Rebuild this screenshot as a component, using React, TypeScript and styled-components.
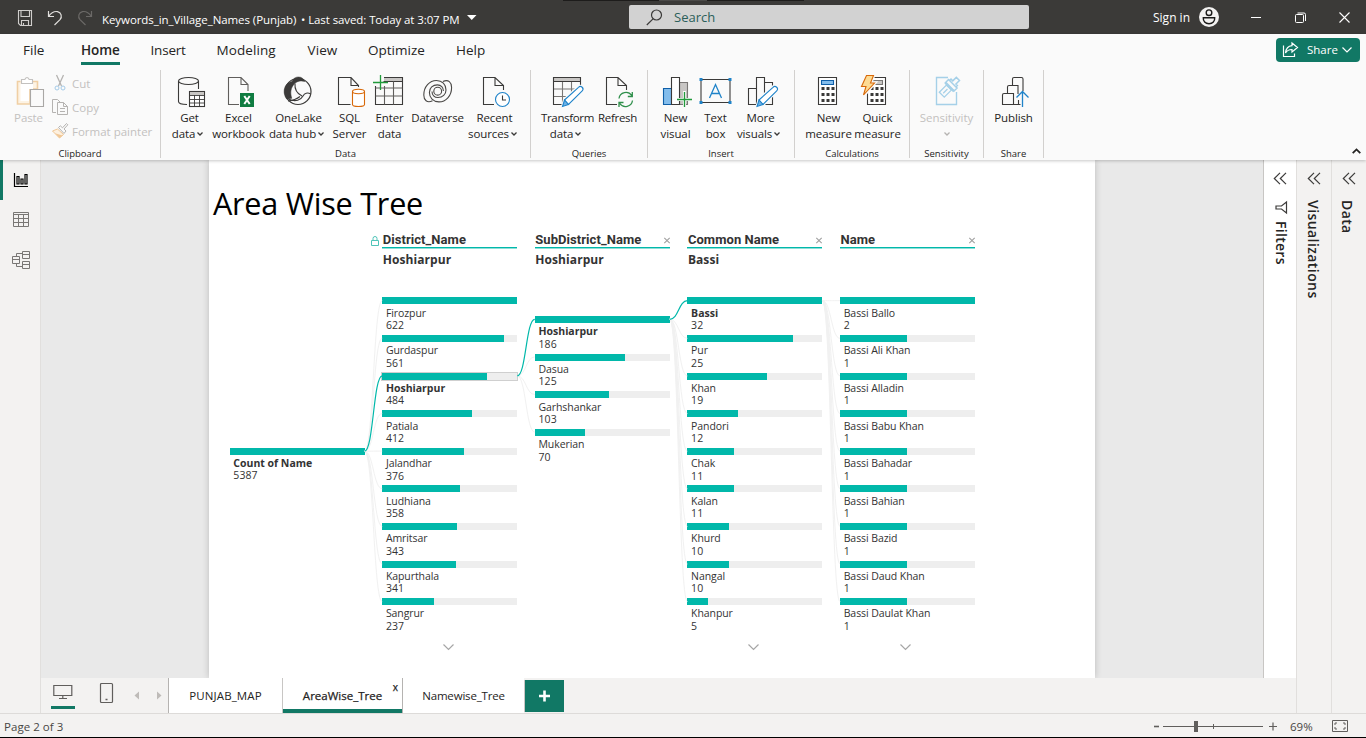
import React from "react";
import styled, { createGlobalStyle } from "styled-components";

const GREEN = "#117865";
const TEAL = "#01b8aa";
const INK = "#252423";

const Global = createGlobalStyle`
  html, body { margin: 0; padding: 0; }
  body { font-family: "Open Sans", "Noto Sans", sans-serif; color: ${INK}; background: #fafafa; overflow: hidden; }
  * { box-sizing: border-box; }
  svg { display: block; overflow: visible; flex: none; }
`;

const Window = styled.div`
  width: 1366px;
  height: 738px;
  display: flex;
  flex-direction: column;
  border-bottom: 1px solid #000;
  overflow: hidden;
`;

/* ---------- title bar ---------- */

const TitleBar = styled.header`
  position: relative;
  height: 34px;
  flex: none;
  display: flex;
  align-items: flex-start;
  background: #3b3a38;
  color: #fff;
`;
const TopNotch = styled.div`
  position: absolute;
  left: 563px;
  top: 0;
  width: 241px;
  height: 1px;
  background: linear-gradient(to right, #1d1c1b 96px, #4b4a48 96px 144px, #1d1c1b 144px);
`;
const QuickAccess = styled.div`
  width: 102px;
  height: 34px;
  padding: 10px 0 0 17px;
  display: flex;
  gap: 14px;
`;
const FileTitle = styled.div`
  width: 527px;
  padding-top: 12px;
  display: flex;
  font-size: 11.5px;
  line-height: 16px;
  white-space: pre;
`;
const FileName = styled.span`
  width: 199px;
  letter-spacing: -0.07px;
`;
const SavedAt = styled.span`
  width: 166px;
  letter-spacing: -0.09px;
`;
const SearchBox = styled.div`
  width: 400px;
  height: 24px;
  margin-top: 5px;
  padding-left: 17px;
  display: flex;
  align-items: center;
  gap: 11px;
  border-radius: 2px;
  background: #d2d2d2;
  color: #2b5f5a;
  font-size: 13px;
  line-height: 24px;
`;
const SignIn = styled.div`
  width: 198px;
  padding: 7px 0 0 124px;
  display: flex;
  gap: 9px;
  font-size: 12px;
  line-height: 21px;
  white-space: nowrap;
`;
const WindowButtons = styled.div`
  padding: 12px 0 0 24px;
  display: flex;
  gap: 33px;
`;

/* ---------- ribbon ---------- */

const Ribbon = styled.section`
  position: relative;
  z-index: 2;
  height: 126px;
  flex: none;
  background: #fafafa;
  box-shadow: 0 1px 3px rgba(0, 0, 0, 0.22);
`;
const TabRow = styled.nav`
  height: 32px;
  padding-left: 23px;
  display: flex;
`;
const Tab = styled.div<{ $w: number }>`
  width: ${(p) => p.$w}px;
  padding-top: 6px;
  font-size: 13.5px;
  line-height: 20px;
`;
const TabText = styled.span<{ $on?: boolean; $ls?: number }>`
  display: inline-block;
  height: 25px;
  letter-spacing: ${(p) => p.$ls ?? 0}px;
  font-weight: ${(p) => (p.$on ? 600 : 400)};
  border-bottom: ${(p) => (p.$on ? `3px solid ${GREEN}` : "0")};
`;
const ShareButton = styled.button`
  width: 84px;
  height: 24px;
  margin: 4px 6px 0 auto;
  padding: 0 0 0 6px;
  display: flex;
  align-items: center;
  gap: 8px;
  border: 0;
  border-radius: 4px;
  background: ${GREEN};
  color: #fff;
  font: 11.5px/24px "Open Sans", sans-serif;
`;
const ShareText = styled.span`
  width: 27px;
`;
const Groups = styled.div`
  height: 94px;
  padding-top: 4px;
  display: flex;
`;
const Group = styled.div<{ $w: number; $pad: number }>`
  width: ${(p) => p.$w}px;
  height: 88px;
  display: flex;
  flex-direction: column;
  justify-content: space-between;
  border-right: 1px solid #d2d0ce;
  > div:first-child { padding-left: ${(p) => p.$pad}px; }
`;
const GroupBody = styled.div`
  display: flex;
  padding-top: 5px;
`;
const GroupName = styled.div`
  font-size: 9.5px;
  line-height: 12px;
  margin-bottom: -2px;
  text-align: center;
`;
const Cmd = styled.div<{ $w: number; $off?: boolean }>`
  width: ${(p) => p.$w}px;
  display: flex;
  flex-direction: column;
  align-items: center;
  font-size: 11.5px;
  line-height: 16px;
  white-space: nowrap;
  color: ${(p) => (p.$off ? "#c3c1bf" : INK)};
  svg.big { margin-bottom: 3px; }
`;
const CmdLine = styled.span<{ $ls?: number; $drop?: boolean }>`
  height: 16px;
  display: flex;
  align-items: center;
  gap: 2px;
  padding-left: 1px;
  padding-right: ${(p) => (p.$drop ? 4 : 0)}px;
  letter-spacing: ${(p) => p.$ls ?? -0.1}px;
`;
const ClipList = styled.div`
  margin-top: -4px;
  padding-left: 3px;
  display: flex;
  flex-direction: column;
`;
const ClipItem = styled.div`
  height: 24px;
  display: flex;
  align-items: center;
  gap: 4px;
  font-size: 11.5px;
  line-height: 15px;
  color: #c3c1bf;
  white-space: nowrap;
`;
const Collapse = styled.div`
  margin: 78px 5px 0 auto;
`;

/* ---------- body ---------- */

const Body = styled.main`
  height: 553px;
  flex: none;
  display: flex;
`;
const Rail = styled.aside`
  width: 41px;
  border-right: 1px solid #e1dfdd;
  background: #f3f2f1;
`;
const RailItem = styled.div<{ $on?: boolean }>`
  height: 40px;
  display: flex;
  align-items: center;
  padding-left: ${(p) => (p.$on ? 8 : 11)}px;
  border-left: ${(p) => (p.$on ? `3px solid ${GREEN}` : "0")};
`;
const Center = styled.div`
  width: 1255px;
  display: flex;
  flex-direction: column;
`;
const Stage = styled.div`
  height: 518px;
  display: flex;
`;
const Canvas = styled.div`
  width: 1222px;
  display: flex;
  justify-content: flex-start;
  padding-left: 168px;
  background: #e9e9e9;
  overflow: hidden;
`;
const Page = styled.div`
  position: relative;
  width: 886px;
  height: 518px;
  background: #fff;
  box-shadow: 0 0 7px rgba(0, 0, 0, 0.2);
`;
const PageTitle = styled.h1`
  margin: 0;
  padding: 21px 0 0 4px;
  height: 72px;
  font-size: 30.6px;
  font-weight: 400;
  line-height: 44px;
  letter-spacing: -0.24px;
  color: #000;
  white-space: nowrap;
`;
const Pane = styled.aside<{ $w: number; $white?: boolean }>`
  width: ${(p) => p.$w}px;
  flex: none;
  padding-top: 12px;
  display: flex;
  flex-direction: column;
  align-items: center;
  border-left: 1px solid ${(p) => (p.$white ? "#c8c6c4" : "#e1dfdd")};
  background: ${(p) => (p.$white ? "#fff" : "#f3f2f1")};
`;
const PaneTitle = styled.div<{ $ls: number; $top: number; $right?: number }>`
  margin-top: ${(p) => p.$top}px;
  margin-right: ${(p) => p.$right ?? 0}px;
  writing-mode: vertical-rl;
  font-size: 14px;
  font-weight: 600;
  line-height: 18px;
  letter-spacing: ${(p) => p.$ls}px;
`;

/* ---------- decomposition tree ---------- */

const Tree = styled.div`
  display: flex;
  gap: 17.6px;
  padding-left: 20.5px;
`;
const Level = styled.div`
  width: 135px;
`;
const LevelHead = styled.div`
  position: relative;
  height: 16px;
  display: flex;
  justify-content: space-between;
  align-items: center;
  border-bottom: 1px solid ${TEAL};
  box-shadow: 0 1px 0 rgba(1, 184, 170, 0.45);
  font: 700 13px/15px Roboto, sans-serif;
  color: #333;
`;
const LevelName = styled.span`
  padding-left: 0.6px;
  letter-spacing: 0.06px;
`;
const LockSlot = styled.span`
  position: absolute;
  left: -11px;
  top: 4px;
`;
const Picked = styled.div`
  height: 18px;
  margin-top: 3px;
  padding-left: 0.6px;
  font-size: 12px;
  font-weight: 700;
  line-height: 18px;
  letter-spacing: 0.08px;
  color: #333;
`;
const Rows = styled.div<{ $top: number }>`
  padding-top: ${(p) => p.$top}px;
`;
const Row = styled.div`
  height: 37.6px;
  font-size: 10.5px;
  line-height: 12.4px;
  letter-spacing: -0.08px;
  color: #333;
  white-space: nowrap;
`;
const Track = styled.div<{ $sel?: boolean }>`
  height: 7px;
  background: #eee;
  box-shadow: ${(p) => (p.$sel ? "0 0 0 1px #cfcfcf" : "none")};
`;
const Bar = styled.div`
  height: 7px;
  background: ${TEAL};
`;
const RowName = styled.div<{ $bold?: boolean }>`
  padding: 2.3px 0 0 3.8px;
  font-weight: ${(p) => (p.$bold ? 700 : 400)};
  letter-spacing: ${(p) => (p.$bold ? 0 : -0.08)}px;
`;
const RowValue = styled.div`
  padding-left: 3.8px;
  letter-spacing: 0.1px;
`;
const MoreSlot = styled.div`
  display: flex;
  justify-content: center;
  margin: 8px 3px 0 0;
`;
const Links = styled.svg`
  position: absolute;
  left: 0;
  top: 0;
  pointer-events: none;
`;

/* ---------- page tabs + status bar ---------- */

const PageBar = styled.div`
  height: 35px;
  display: flex;
  background: #f3f2f1;
`;
const ViewSwitch = styled.div`
  width: 127px;
  display: flex;
  padding-left: 10px;
  align-items: flex-start;
`;
const ViewIcon = styled.div<{ $w: number; $on?: boolean }>`
  width: ${(p) => p.$w}px;
  height: 31px;
  display: flex;
  justify-content: center;
  padding-top: 4px;
  border-bottom: ${(p) => (p.$on ? `3px solid ${GREEN}` : "0")};
`;
const PageTab = styled.div<{ $w: number; $on?: boolean; $ls?: number }>`
  position: relative;
  width: ${(p) => p.$w}px;
  height: 35px;
  text-align: center;
  font-size: 11.5px;
  line-height: 35px;
  letter-spacing: ${(p) => p.$ls ?? 0}px;
  border-left: 1px solid ${(p) => (p.$on ? "#c8c6c4" : "#b5b3b1")};
  box-shadow: ${(p) => (p.$on ? `inset 0 -4px 0 ${GREEN}` : "none")};
  -webkit-text-stroke: ${(p) => (p.$on ? "0.25px #252423" : "0")};
  background: #fff;
`;
const CloseMark = styled.span`
  position: absolute;
  right: 4px;
  top: 3px;
  font-size: 10px;
  line-height: 12px;
`;
const AddTab = styled.div`
  width: 40px;
  height: 32px;
  margin-top: 2px;
  display: flex;
  align-items: center;
  justify-content: center;
  border-left: 1px solid #c8c6c4;
  background: ${GREEN};
`;
const StatusBar = styled.footer`
  height: 24px;
  flex: none;
  display: flex;
  align-items: center;
  justify-content: space-between;
  padding: 1px 18px 0 4px;
  border-top: 1px solid #dddbd9;
  background: #f3f2f1;
  font-size: 11.5px;
  color: #484644;
`;
const PageCount = styled.span`
  letter-spacing: 0.04px;
`;
const Zoom = styled.div`
  display: flex;
  align-items: center;
`;
const ZoomValue = styled.span`
  width: 24px;
  margin: 0 18px 0 13px;
`;

/* ---------- icons ---------- */

const D = "#3b3a39";
const BLUE = "#1f83c9";

const Big = ({ children }: { children: React.ReactNode }) => (
  <svg className="big" width="32" height="32" viewBox="0 0 32 32" fill="none" stroke={D} strokeWidth="1.1">
    {children}
  </svg>
);

const Pencil = ({ x = 0 }: { x?: number }) => (
  <g transform={`translate(${x} 0)`}>
    <path d="M11.5 31.5l2-7L27.3 12a2.7 2.7 0 0 1 4 3.8L18 29.5z" fill="#fafafa" stroke="#fafafa" strokeWidth="3" />
    <path d="M13.5 25L27.5 12.3a2.5 2.5 0 0 1 3.7 3.6L17.5 29.500z" fill="#fff" stroke={BLUE} />
    <path d="M13.5 25l4 4.5-6 2z" fill="#6cb1e6" stroke={BLUE} />
  </g>
);

const Chevron = ({ w = 6, c = D, s = 1.3 }: { w?: number; c?: string; s?: number }) => (
  <svg width={w} height={w / 2 + 1} viewBox={`0 0 ${w} ${w / 2 + 1}`} fill="none" stroke={c} strokeWidth={s}>
    <path d={`M.5 .5L${w / 2} ${w / 2}L${w - 0.5} .5`} />
  </svg>
);

const GetDataIcon = () => (
  <Big>
    <ellipse cx="15.5" cy="6" rx="10" ry="3.5" />
    <path d="M5.5 6v20.5c0 1.800 4 3 8.500 3M25.5 6v8" />
    <rect x="16.5" y="16.5" width="15" height="15" fill="#fff" />
    <path d="M17 17h14v3H17z" fill="#c8c6c4" stroke="none" />
    <path d="M16.5 20.5h15M16.5 24.5h15M16.5 28h15M21.5 20v11.500M26.5 20v11.500" strokeWidth=".9" />
  </Big>
);
const ExcelIcon = () => (
  <Big>
    <g stroke="#605e5c"><path d="M17 29.5H6.5V2.500H19l7 7V16M19 2.500v7h7" /></g>
    <rect x="18" y="18" width="14" height="14" fill="#107c41" stroke="none" />
    <path d="M22.3 21l5.400 8M27.7 21l-5.400 8" stroke="#fff" strokeWidth="2" />
  </Big>
);
const OneLakeIcon = () => (
  <Big>
    <circle cx="16" cy="16.500" r="13" strokeWidth="1.200" />
    <path d="M10 6.500C11.500 3 14 2 16.500 2c3 0 5.200 1.600 6.300 4.600-3.800-1.400-7.300-.8-10.300 2.200-3.500 3.500-4.700 8.500-2.700 14.500-2 .8-3.800 1-5.300.5C1.800 20 1.600 15.500 3 12c1.300-3 3.700-5 7-5.500z" fill={D} strokeWidth=".5" />
    <path d="M13 8.500c-.5 5.500 2 10 7 12.500M7 24.300c6.500 3 12 .6 14-3.300 1.600-3 4.500-3.800 7.700-2M6 26c4.500-.5 8.500-1.700 12-4.500" />
  </Big>
);
const SqlIcon = () => (
  <Big>
    <path d="M17.5 29.500H5.500V2.500H18l7.500 8V12M18 2.500v8h7.500" />
    <g stroke="#d8690a" fill="#fff">
      <path d="M19.5 16.500v13c0 1.200 2.800 2 6 2s6-.8 6-2v-13" />
      <ellipse cx="25.500" cy="16.500" rx="6" ry="2.200" />
    </g>
  </Big>
);
const EnterIcon = () => (
  <Big>
    <path d="M11 3h19v3H11z" fill="#c8c6c4" stroke="none" />
    <path d="M11 2.500h18.500v27h-27V11M10.500 6.500h19" />
    <path d="M2.500 13h27M2.500 21h27M11.500 11v18.500M20.500 6.500v23" stroke="#605e5c" />
    <path d="M7.500 0v15M0 7.500h15" stroke="#219a3b" strokeWidth="1.300" />
  </Big>
);
const swirl = "M11.500 25.800C6 28.500 2.800 25 2.800 20 2.800 11.500 8.500 5.500 15.500 5.500c5.700 0 9.500 4 9.500 9.500 0 4.500-3.500 7.500-8 7.500-3.700 0-6-2.600-6-6";
const DataverseIcon = () => (
  <Big>
    <g strokeWidth="1.100" stroke="#4a4846">
      <path d={swirl} />
      <path d={swirl} transform="rotate(180 16.700 16.200)" />
      <circle cx="16.700" cy="16.200" r="3.900" />
    </g>
  </Big>
);
const RecentIcon = () => (
  <Big>
    <path d="M16 29.500H5.500V2.500H17l8.500 8V15M17 2.500v8h8.500" />
    <circle cx="24.500" cy="24.500" r="7" stroke={BLUE} fill="#fff" />
    <path d="M24.500 20.500v4.500h3.500" />
  </Big>
);
const TransformIcon = () => (
  <Big>
    <path d="M3 3h26v3H3z" fill="#c8c6c4" stroke="none" />
    <path d="M3 14h26M3 21.500h20M11.500 6.500v23M20.500 6.500v15" stroke="#797775" />
    <path d="M13 29.500H2.500v-27h27V12M2.500 6.500h27" />
    <Pencil />
  </Big>
);
const RefreshIcon = () => (
  <Big>
    <path d="M16 29.500H5.500V2.500H17l8.500 8V15M17 2.500v8h8.500" />
    <g stroke="#2f8f4b" strokeWidth="1.300">
      <path d="M18 23.500a7 7 0 0 1 12.700-3M31.300 17v4.500h-4.500M31.500 25.500a7 7 0 0 1-12.700 3M18 32v-4.500h4.500" />
    </g>
  </Big>
);
const NewVisualIcon = () => (
  <Big>
    <path d="M20.500 7.500h8v22h-8z" fill="#c8c6c4" stroke="#797775" />
    <path d="M4.500 13.500h8v16h-8z" fill="#83bdec" stroke="#0f5fa8" />
    <path d="M12.500 2.500h8v27h-8z" fill="#fff" />
    <path d="M25.500 16v17M18 24.500h16" stroke="#fafafa" strokeWidth="3" />
    <path d="M25.500 17v15M18 24.500h15" stroke="#219a3b" strokeWidth="1.300" />
  </Big>
);
const TextBoxIcon = () => (
  <Big>
    <path d="M2 4.500h29v23H2z" />
    <path d="M10.500 23L16.500 9.500 22.500 23M12.500 18.500h8" stroke={BLUE} strokeWidth="1.300" />
    <path d="M.5 3h3v3h-3zM29.500 3h3v3h-3zM.5 26h3v3h-3zM29.500 26h3v3h-3z" fill={BLUE} stroke="none" />
  </Big>
);
const MoreVisualsIcon = () => (
  <Big>
    <path d="M4.500 13.500h8v16h-8zM12.500 2.500h8v27h-8zM20.500 7.500h8v22h-8" />
    <Pencil x={1.5} />
  </Big>
);
const keys = [0, 1, 2].flatMap((r) => [0, 1, 2].map((c) => `M${9 + c * 5} ${12 + r * 6}h3v3h-3z`)).join("");
const MeasureIcon = () => (
  <Big>
    <path d="M6.500 2.500h18v27h-18z" fill="#fff" />
    <path d="M9.500 5.500h12v4h-12z" fill="#83bdec" stroke="#0f5fa8" />
    <path d={keys} transform="translate(.5 0)" fill={D} stroke="none" />
  </Big>
);
const QuickIcon = () => (
  <Big>
    <path d="M6.500 2.500h18v27h-18z" fill="#fff" />
    <path d="M12 5.500h9.500v4H12z" fill="#c8c6c4" stroke="#797775" />
    <path d={keys} transform="translate(.5 0)" fill={D} stroke="none" />
    <g transform="translate(-1 0)">
      <path d="M6.500.5h7L10.500 8h4L3.500 20.500l2.500-9H1z" fill="#fafafa" stroke="#fafafa" strokeWidth="3.500" />
      <path d="M6.500.5h7L10.500 8h4L3.500 20l2.500-8.500H1.500z" fill="#fddb94" stroke="#d8690a" />
    </g>
  </Big>
);
const SensitivityIcon = () => (
  <Big>
    <g stroke="#a5d0e8">
      <path d="M18 2.500H6.500v27h20V17" strokeWidth="1.400" />
      <g transform="translate(21 10.500) rotate(-45)">
        <path d="M-13-3.500h10v7h-10zM-11 0h6" fill="#fafafa" strokeWidth="1.300" />
        <path d="M-2-6h4.500V6H-2zM2.500-4.500h2v2.500h5v4.500h-5V4.500h-2z" fill="#fafafa" strokeWidth="1.500" />
        <path d="M-2-6V6" strokeWidth="2.500" />
      </g>
    </g>
  </Big>
);
const PublishIcon = () => (
  <Big>
    <path d="M11 29.500H5.500V20q0-1.500 1.500-1.500h9.500v11H11M10.500 18.500V12q0-1.500 1.500-1.500h9V19M15.500 10.500V4q0-1.500 1.500-1.500h7.500q1.500 0 1.500 1.500v12M16.500 29.500h7M21.500 25v4.500" />
    <path d="M25.500 32V17M19.500 22.500l6-6 6 6" stroke={BLUE} strokeWidth="1.300" />
  </Big>
);
const PasteIcon = () => (
  <Big>
    <path d="M8.500 6.500h-3v22.500H18V14h7.500V6.500H21" stroke="#f0cfa4" fill="#fdf3e4" strokeWidth="1.600" />
    <path d="M8.500 14v12H17V14h4V9H8.500z" fill="#fff" stroke="none" />
    <path d="M9.500 8.500v-4h3.300q2.200-4 4.400 0h3.300v4z" fill="#fff" stroke="#c3c1bf" />
    <path d="M18.500 14.500h13v17h-13z" fill="#fafafa" stroke="#a9a7a5" />
  </Big>
);

const Chevrons = () => (
  <svg width="14" height="14" viewBox="0 0 14 14" fill="none" stroke={D} strokeWidth="1.200">
    <path d="M7 .8L1.300 6.500 7 12.200M13 .8L7.300 6.500l5.700 5.700" />
  </svg>
);
const SmallX = () => (
  <svg width="6" height="6" viewBox="0 0 6 6" stroke="#a0a0a0" strokeWidth="1.100">
    <path d="M.3.8l5.400 5.400M5.700.8L.3 6.200" />
  </svg>
);
const Lock = () => (
  <svg width="8" height="10" viewBox="0 0 8 10" fill="none" stroke="#4fc4b8">
    <path d="M.5 4.500h7v5h-7zM2 4.500V2.500a2 2 0 0 1 4 0v2" />
  </svg>
);

/* ---------- data ---------- */

type Item = [string, number];
interface LevelData {
  name: string;
  picked: string;
  offset: number;
  selected: number;
  more: boolean;
  lock?: boolean;
  items: Item[];
}
const levels: LevelData[] = [
  {
    name: "District_Name", picked: "Hoshiarpur", offset: 0, selected: 2, more: true, lock: true,
    items: [["Firozpur", 622], ["Gurdaspur", 561], ["Hoshiarpur", 484], ["Patiala", 412], ["Jalandhar", 376], ["Ludhiana", 358], ["Amritsar", 343], ["Kapurthala", 341], ["Sangrur", 237]],
  },
  {
    name: "SubDistrict_Name", picked: "Hoshiarpur", offset: 18.6, selected: 0, more: false,
    items: [["Hoshiarpur", 186], ["Dasua", 125], ["Garhshankar", 103], ["Mukerian", 70]],
  },
  {
    name: "Common Name", picked: "Bassi", offset: 0, selected: 0, more: true,
    items: [["Bassi", 32], ["Pur", 25], ["Khan", 19], ["Pandori", 12], ["Chak", 11], ["Kalan", 11], ["Khurd", 10], ["Nangal", 10], ["Khanpur", 5]],
  },
  {
    name: "Name", picked: "", offset: 0, selected: -1, more: true,
    items: [["Bassi Ballo", 2], ["Bassi Ali Khan", 1], ["Bassi Alladin", 1], ["Bassi Babu Khan", 1], ["Bassi Bahadar", 1], ["Bassi Bahian", 1], ["Bassi Bazid", 1], ["Bassi Daud Khan", 1], ["Bassi Daulat Khan", 1]],
  },
];

const PITCH = 152.6;
const rowY = (level: number, i: number) => 140.7 + levels[level].offset + i * 37.6;

const TreeLinks = () => {
  const light: string[] = [];
  const strong: string[] = [];
  levels.forEach((lv, l) => {
    const x0 = 155.6 + l * PITCH;
    const x1 = x0 + 17.6;
    const y0 = l === 0 ? 291.2 : rowY(l - 1, levels[l - 1].selected);
    const mid = (x0 + x1) / 2;
    lv.items.forEach((_, i) => {
      const y1 = rowY(l, i);
      const d = `M${x0} ${y0}C${mid} ${y0} ${mid} ${y1} ${x1} ${y1}`;
      (i === lv.selected ? strong : light).push(d);
    });
  });
  return (
    <Links width="886" height="518" fill="none">
      <path d={light.join("")} stroke="#f1f1f1" />
      <path d={strong.join("")} stroke={TEAL} strokeWidth="1.200" />
    </Links>
  );
};

const TreeRow = ({ item, max, bold, outlined }: { item: Item; max: number; bold?: boolean; outlined?: boolean }) => (
  <Row>
    <Track $sel={outlined}>
      <Bar style={{ width: `${(item[1] / max) * 100}%` }} />
    </Track>
    <RowName $bold={bold}>{item[0]}</RowName>
    <RowValue>{item[1]}</RowValue>
  </Row>
);

const Command = ({ w, icon, a, b, ls, drop, off }: { w: number; icon: React.ReactNode; a: string; b?: string; ls?: number; drop?: boolean; off?: boolean }) => (
  <Cmd $w={w} $off={off}>
    {icon}
    <CmdLine $ls={ls}>{a}</CmdLine>
    <CmdLine $drop={drop && !!b}>
      {b}
      {drop && <Chevron c={off ? "#b5b3b1" : D} />}
    </CmdLine>
  </Cmd>
);

export default function App() {
  return (
    <Window>
      <Global />
      <TitleBar>
        <TopNotch />
        <QuickAccess>
          <svg width="16" height="16" viewBox="0 0 16 16" fill="none" stroke="#d0cecc" strokeWidth="1.100">
            <path d="M1.500.5h13v15h-11l-2-2zM4 .5v6h8.500v-6M4.500 15.500v-5h7v5M6.500 15.500v-2.500" />
          </svg>
          <svg width="16" height="16" viewBox="0 0 16 16" fill="none" stroke="#e1dfdd" strokeWidth="1.200">
            <path d="M1.500 1v5.500H7M1.700 6.300C4 3 7 1 10.500 1.600c3.800.9 5 5 2.500 8L7.500 15" />
          </svg>
          <svg width="16" height="16" viewBox="0 0 16 16" fill="none" stroke="#6b6967" strokeWidth="1.200">
            <path d="M14.500 1v5.500H9M14.300 6.300C12 3 9 1 5.500 1.600 1.700 2.500.5 6.600 3 9.600L8.500 15" />
          </svg>
        </QuickAccess>
        <FileTitle>
          <FileName>Keywords_in_Village_Names (Punjab)</FileName>
          <SavedAt>• Last saved: Today at 3:07 PM</SavedAt>
          <svg width="10" height="10" viewBox="0 0 10 10">
            <path d="M0 3h9.500L4.750 8z" fill="#fff" />
          </svg>
        </FileTitle>
        <SearchBox>
          <svg width="17" height="17" viewBox="0 0 17 17" fill="none" stroke="#3b3a39" strokeWidth="1.200">
            <circle cx="10.500" cy="6" r="5" />
            <path d="M7 9.800L.8 16" />
          </svg>
          <span>Search</span>
        </SearchBox>
        <SignIn>
          <span>Sign in</span>
          <svg width="20" height="20" viewBox="0 0 20 20">
            <circle cx="10" cy="10" r="10" fill="#f3f2f1" />
            <circle cx="10" cy="5.700" r="2.800" fill="none" stroke="#1b1a19" strokeWidth="1.400" />
            <path d="M4.300 10.700h11.400c.3 3.500-2 6-5.700 6s-6-2.500-5.700-6z" fill="none" stroke="#1b1a19" strokeWidth="1.400" />
          </svg>
        </SignIn>
        <WindowButtons>
          <svg width="11" height="11" viewBox="0 0 11 11" stroke="#fff"><path d="M0 5.500h10" /></svg>
          <svg width="11" height="11" viewBox="0 0 11 11" fill="none" stroke="#fff">
            <rect x=".5" y="2.500" width="8" height="8" rx="1" />
            <path d="M2.500 1h6.500q1.500 0 1.500 1.500v6.500" />
          </svg>
          <svg width="11" height="11" viewBox="0 0 11 11" stroke="#fff" strokeWidth="1.100"><path d="M.5.5l10 10M10.500.5l-10 10" /></svg>
        </WindowButtons>
      </TitleBar>

      <Ribbon>
        <TabRow>
          <Tab $w={58}><TabText>File</TabText></Tab>
          <Tab $w={69.5}><TabText $on $ls={-0.1}>Home</TabText></Tab>
          <Tab $w={66}><TabText $ls={-0.2}>Insert</TabText></Tab>
          <Tab $w={91}><TabText $ls={0.08}>Modeling</TabText></Tab>
          <Tab $w={60.5}><TabText $ls={0.1}>View</TabText></Tab>
          <Tab $w={88}><TabText>Optimize</TabText></Tab>
          <Tab $w={60}><TabText>Help</TabText></Tab>
          <ShareButton>
            <svg width="17" height="16" viewBox="0 0 17 16" fill="none" stroke="#fff" strokeWidth="1.200">
              <path d="M1.500 3.500v11h11v-3M10 1l5.500 4.500L10 10V7.500C7 7.500 5 8.500 3.500 11 4 6.500 6.500 4 10 3.700z" />
            </svg>
            <ShareText>Share</ShareText>
            <Chevron w={10} c="#fff" s={1.2} />
          </ShareButton>
        </TabRow>
        <Groups>
          <Group $w={161} $pad={7}>
            <GroupBody>
              <Command w={42} icon={<PasteIcon />} a="Paste" off />
              <ClipList>
                <ClipItem>
                  <svg width="16" height="16" viewBox="0 0 16 16" fill="none" stroke="#b5b3b1">
                    <path d="M4.500 0l5 11M11.500 0l-5 11" strokeWidth="1.300" />
                    <circle cx="5" cy="13" r="2" stroke="#a5cbe8" />
                    <circle cx="11" cy="13" r="2" stroke="#a5cbe8" />
                  </svg>
                  Cut
                </ClipItem>
                <ClipItem>
                  <svg width="16" height="16" viewBox="0 0 16 16" fill="none" stroke="#b5b3b1">
                    <path d="M4 13.500H.5V.5h5l2.500 2.500M5.500 3.500h6l4 4v8h-10zM11.500 3.500v4h4M8 9.500h5M8 12.500h5" />
                  </svg>
                  Copy
                </ClipItem>
                <ClipItem>
                  <svg width="16" height="16" viewBox="0 0 16 16" fill="none" stroke="#b5b3b1">
                    <path d="M.5 8L5.500 6l6 5.500-4 3.500z" fill="#fdf0df" stroke="#f0c796" />
                    <path d="M3 10.200l7.500 2.300-3 2.500z" fill="#f0c796" stroke="none" />
                    <path d="M6.500 4.500L8.300 2.800l2.200 2 4-4.300 1.300 1.300-3.800 4.200 2 2-2 2.500z" fill="#fafafa" />
                  </svg>
                  Format painter
                </ClipItem>
              </ClipList>
            </GroupBody>
            <GroupName>Clipboard</GroupName>
          </Group>
          <Group $w={370} $pad={7}>
            <GroupBody>
              <Command w={42} icon={<GetDataIcon />} a="Get" b="data" drop />
              <Command w={56} icon={<ExcelIcon />} a="Excel" b="workbook" />
              <Command w={64} icon={<OneLakeIcon />} a="OneLake" b="data hub" drop />
              <Command w={38} icon={<SqlIcon />} a="SQL" b="Server" />
              <Command w={42} icon={<EnterIcon />} a="Enter" b="data" />
              <Command w={54} icon={<DataverseIcon />} a="Dataverse" ls={-0.17} />
              <Command w={60} icon={<RecentIcon />} a="Recent" b="sources" drop />
            </GroupBody>
            <GroupName>Data</GroupName>
          </Group>
          <Group $w={117} $pad={9}>
            <GroupBody>
              <Command w={54} icon={<TransformIcon />} a="Transform" ls={-0.34} b="data" drop />
              <Command w={46} icon={<RefreshIcon />} a="Refresh" ls={-0.3} />
            </GroupBody>
            <GroupName>Queries</GroupName>
          </Group>
          <Group $w={147} $pad={8}>
            <GroupBody>
              <Command w={38} icon={<NewVisualIcon />} a="New" b="visual" />
              <Command w={42} icon={<TextBoxIcon />} a="Text" b="box" />
              <Command w={48} icon={<MoreVisualsIcon />} a="More" b="visuals" drop />
            </GroupBody>
            <GroupName>Insert</GroupName>
          </Group>
          <Group $w={115} $pad={8}>
            <GroupBody>
              <Command w={50} icon={<MeasureIcon />} a="New" b="measure" />
              <Command w={48} icon={<QuickIcon />} a="Quick" b="measure" />
            </GroupBody>
            <GroupName>Calculations</GroupName>
          </Group>
          <Group $w={74} $pad={6}>
            <GroupBody>
              <Command w={60} icon={<SensitivityIcon />} a="Sensitivity" ls={0} drop off />
            </GroupBody>
            <GroupName>Sensitivity</GroupName>
          </Group>
          <Group $w={60} $pad={6}>
            <GroupBody>
              <Command w={46} icon={<PublishIcon />} a="Publish" />
            </GroupBody>
            <GroupName>Share</GroupName>
          </Group>
          <Collapse>
            <svg width="9" height="6" viewBox="0 0 9 6" fill="none" stroke="#252423" strokeWidth="1.800">
              <path d="M.7 5.200l3.800-3.800 3.800 3.800" />
            </svg>
          </Collapse>
        </Groups>
      </Ribbon>

      <Body>
        <Rail>
          <RailItem $on>
            <svg width="20" height="20" viewBox="0 0 20 20" fill="none" stroke="#000" strokeWidth="1.200">
              <path d="M3.500 3v13.500H17M6 6.500h2v7.500H6zM10 9h2v5h-2zM14 4.500h2v9.500h-2z" />
            </svg>
          </RailItem>
          <RailItem>
            <svg width="20" height="20" viewBox="0 0 20 20" fill="none" stroke="#797775">
              <path d="M2.500 2.500h15v14h-15zM2.500 4.500h15M2.500 8.500h15M2.500 12.500h15M7.500 4.500v12M12.500 4.500v12" />
            </svg>
          </RailItem>
          <RailItem>
            <svg width="20" height="20" viewBox="0 0 20 20" fill="none" stroke="#797775">
              <path d="M1.500 6.500h7v7h-7zM1.500 9.500h7M11.500 1.500h7v7h-7zM11.500 4.500h7M11.500 11.500h7v7h-7zM11.500 14.500h7M5.500 6.500v-3h6M5.500 13.500v3h6" />
            </svg>
          </RailItem>
        </Rail>

        <Center>
          <Stage>
            <Canvas>
              <Page>
                <TreeLinks />
                <PageTitle>Area Wise Tree</PageTitle>
                <Tree>
                  <Level>
                    <Rows $top={215.7}>
                      <TreeRow item={["Count of Name", 5387]} max={5387} bold />
                    </Rows>
                  </Level>
                  {levels.map((lv) => (
                    <Level key={lv.name}>
                      <LevelHead>
                        {lv.lock && <LockSlot><Lock /></LockSlot>}
                        <LevelName>{lv.name}</LevelName>
                        {!lv.lock && <SmallX />}
                      </LevelHead>
                      <Picked>{lv.picked}</Picked>
                      <Rows $top={28.45 + lv.offset}>
                        {lv.items.map((it, i) => (
                          <TreeRow key={it[0]} item={it} max={lv.items[0][1]} bold={i === lv.selected} outlined={i === lv.selected && !!lv.lock} />
                        ))}
                      </Rows>
                      {lv.more && <MoreSlot><Chevron w={11} c="#a6a6a6" s={1.2} /></MoreSlot>}
                    </Level>
                  ))}
                </Tree>
              </Page>
            </Canvas>
            <Pane $w={33} $white>
              <Chevrons />
              <PaneTitle $top={15} $ls={0} $right={-2}>
                <svg width="14" height="13" viewBox="0 0 14 13" fill="none" stroke={D} strokeWidth="1.200">
                  <path d="M12.500 1v11L7.500 8H2V5h5.500z" />
                </svg>
              </PaneTitle>
              <PaneTitle $top={7} $ls={0.3} $right={-2}>Filters</PaneTitle>
            </Pane>
          </Stage>
          <PageBar>
            <ViewSwitch>
              <ViewIcon $w={24} $on>
                <svg width="20" height="17" viewBox="0 0 20 17" fill="none" stroke="#605e5c" strokeWidth="1.200">
                  <path d="M.8 3.500h18v10H.8zM9.800 13.500v3M6 16.500h8" />
                </svg>
              </ViewIcon>
              <ViewIcon $w={64}>
                <svg width="14" height="22" viewBox="0 0 14 22" fill="none" stroke="#605e5c" strokeWidth="1.200">
                  <rect x=".5" y="1.500" width="12" height="19" rx="1" />
                  <path d="M5.500 17.500h2" strokeWidth="1.500" />
                </svg>
              </ViewIcon>
              <svg width="24" height="22" viewBox="0 0 24 22" fill="#bebbb8">
                <path d="M-4.500 17.500l4.500-4v8zM22.500 17.500l-4.500-4v8z" />
              </svg>
            </ViewSwitch>
            <PageTab $w={114} $ls={0.1}>PUNJAB_MAP</PageTab>
            <PageTab $w={120} $on>
              AreaWise_Tree
              <CloseMark>x</CloseMark>
            </PageTab>
            <PageTab $w={122} $ls={-0.18}>Namewise_Tree</PageTab>
            <AddTab>
              <svg width="12" height="12" viewBox="0 0 12 12" stroke="#fff" strokeWidth="2.600"><path d="M5.500 .5v11M0 6h11" /></svg>
            </AddTab>
          </PageBar>
        </Center>
        <Pane $w={35}>
          <Chevrons />
          <PaneTitle $top={14} $ls={0.42} $right={2}>Visualizations</PaneTitle>
        </Pane>
        <Pane $w={35}>
          <Chevrons />
          <PaneTitle $top={14} $ls={0.4} $right={4}>Data</PaneTitle>
        </Pane>
      </Body>

      <StatusBar>
        <PageCount>Page 2 of 3</PageCount>
        <Zoom>
          <svg width="124" height="14" viewBox="0 0 124 14" stroke="#605e5c">
            <path d="M1 7.500h5" strokeWidth="1.600" />
            <path d="M10 7.500h100M60.500 5v5" />
            <path d="M41 2h4v11h-4z" fill="#605e5c" stroke="none" />
            <path d="M116 7.500h8M120 3.500v8" strokeWidth="1.200" />
          </svg>
          <ZoomValue>69%</ZoomValue>
          <svg width="16" height="12" viewBox="0 0 16 12" fill="none" stroke="#605e5c">
            <path d="M.5.5h15v11H.5zM3 5V3h2M11 3h2v2M13 7v2h-2M5 9H3V7" />
          </svg>
        </Zoom>
      </StatusBar>
    </Window>
  );
}
